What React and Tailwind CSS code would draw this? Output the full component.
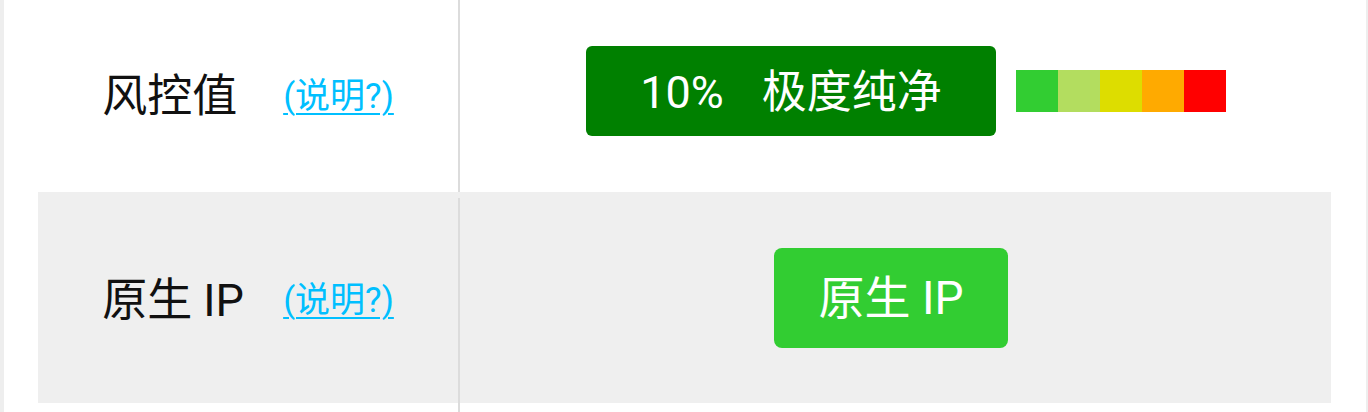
const FONT = { fontFamily: 'Roboto, "Noto Sans CJK SC", sans-serif' }

const SCALE = ['bg-[#32cd32]', 'bg-[#b3dd5f]', 'bg-[#dddd00]', 'bg-[#ffaa00]', 'bg-[#ff0000]']

function Label({ text }) {
  return (
    <div className="flex items-center justify-center border-r-2 border-[#dcdcdc]">
      <span className="w-[181px] text-[45px] text-[#111111] leading-none">{text}</span>
      <a href="#" className="text-[35px] leading-none text-[#00bfff] underline underline-offset-[5px] decoration-2">
        (说明?)
      </a>
    </div>
  )
}

export default function App() {
  return (
    <div className="h-[412px] w-full bg-white border-l-4 border-r-2 border-[#eeeeee] overflow-hidden" style={FONT}>
      <div className="ml-[34px] mr-[35px] grid grid-cols-[422px_1fr]">
        {/* 风控值 */}
        <div className="h-[192px] grid">
          <Label text="风控值" />
        </div>
        <div className="h-[192px] flex items-center justify-center pl-[21px] pb-[10px]">
          <div className="w-[410px] h-[90px] rounded-md bg-[#008000] text-white text-[45px] flex items-center justify-center leading-none pt-[2px]">
            <span>10%</span>
            <span className="ml-[38px]">极度纯净</span>
          </div>
          <div className="ml-[20px] flex">
            {SCALE.map((c) => (
              <div key={c} className={`w-[42px] h-[42px] ${c}`} />
            ))}
          </div>
        </div>

        {/* 原生 IP */}
        <div className="h-[211px] grid bg-[#efefef] pt-[6px]">
          <Label text="原生 IP" />
        </div>
        <div className="h-[211px] flex items-center justify-center bg-[#efefef] pr-[9px]">
          <div className="w-[234px] h-[100px] rounded-lg bg-[#32cd32] text-white text-[46px] flex items-center justify-center leading-none">
            原生 IP
          </div>
        </div>

        <div className="h-[20px] border-r-2 border-[#dcdcdc]" />
        <div />
      </div>
    </div>
  )
}
